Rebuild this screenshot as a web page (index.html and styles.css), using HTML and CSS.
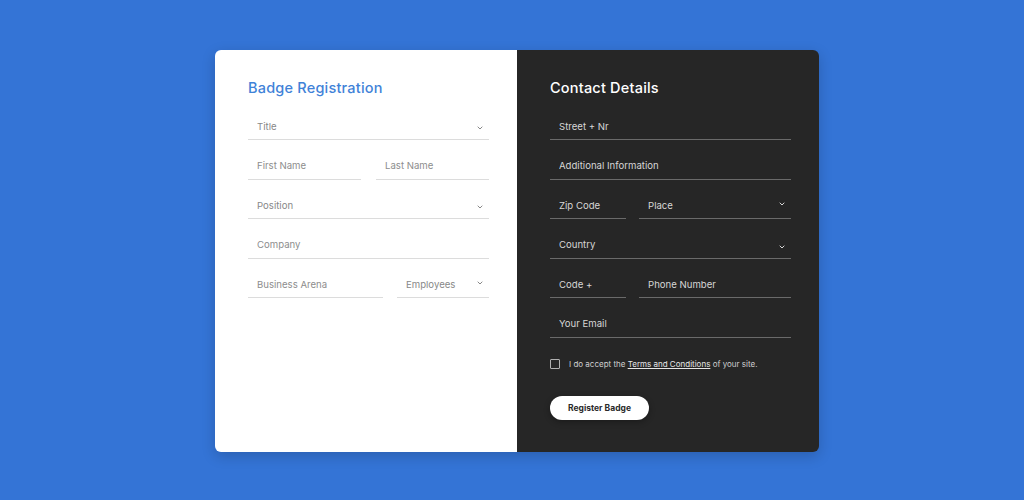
FILE: index.html
```html
<!DOCTYPE html>
<html lang="en">
<head>
    <meta charset="UTF-8">
    <meta name="viewport" content="width=device-width, initial-scale=1.0">
    <title>Badge Registration</title>
    <link rel="stylesheet" href="styles.css">
</head>
<body>

<div class="card">
    <div class="panel panel-light">
        <h2 class="heading">Badge Registration</h2>
        <div class="fields">
            <div class="field select">
                <select><option>Title</option></select>
                <svg class="chevron" viewBox="0 0 6 4" width="6" height="4"><path d="M0.7 0.7 L3 3 L5.3 0.7" /></svg>
            </div>
            <div class="row">
                <div class="field"><input type="text" placeholder="First Name"></div>
                <div class="field"><input type="text" placeholder="Last Name"></div>
            </div>
            <div class="field select">
                <select><option>Position</option></select>
                <svg class="chevron" viewBox="0 0 6 4" width="6" height="4"><path d="M0.7 0.7 L3 3 L5.3 0.7" /></svg>
            </div>
            <div class="field"><input type="text" placeholder="Company"></div>
            <div class="row row-arena">
                <div class="field"><input type="text" placeholder="Business Arena"></div>
                <div class="field select">
                    <select><option>Employees</option></select>
                    <svg class="chevron up" viewBox="0 0 6 4" width="6" height="4"><path d="M0.7 0.7 L3 3 L5.3 0.7" /></svg>
                </div>
            </div>
        </div>
    </div>

    <div class="panel panel-dark">
        <h2 class="heading">Contact Details</h2>
        <div class="fields">
            <div class="field"><input type="text" placeholder="Street + Nr"></div>
            <div class="field"><input type="text" placeholder="Additional Information"></div>
            <div class="row row-short">
                <div class="field"><input type="text" placeholder="Zip Code"></div>
                <div class="field select">
                    <select><option>Place</option></select>
                    <svg class="chevron up" viewBox="0 0 6 4" width="6" height="4"><path d="M0.7 0.7 L3 3 L5.3 0.7" /></svg>
                </div>
            </div>
            <div class="field select">
                <select><option>Country</option></select>
                <svg class="chevron" viewBox="0 0 6 4" width="6" height="4"><path d="M0.7 0.7 L3 3 L5.3 0.7" /></svg>
            </div>
            <div class="row row-short">
                <div class="field"><input type="text" placeholder="Code +"></div>
                <div class="field"><input type="text" placeholder="Phone Number"></div>
            </div>
            <div class="field"><input type="email" placeholder="Your Email"></div>
        </div>

        <label class="terms">
            <span class="box"></span>
            <span>I do accept the <a href="#">Terms and Conditions</a> of your site.</span>
        </label>

        <button class="register">Register Badge</button>
    </div>
</div>

</body>
</html>
```

FILE: styles.css
```css
* {
    margin: 0;
    padding: 0;
    box-sizing: border-box;
}

body {
    font-family: 'Inter', 'Noto Sans', sans-serif;
    background-color: #3474d6;
    height: 100vh;
    display: flex;
    justify-content: center;
    align-items: flex-start;
    padding: 50px 0 0 10px;
}

.card {
    width: 604px;
    height: 402px;
    display: flex;
    border-radius: 6px;
    overflow: hidden;
    box-shadow: 0 4px 14px rgba(0, 0, 0, 0.18);
}

.panel {
    width: 302px;
    padding: 29px 28px 0 33px;
}

.panel-light {
    background-color: #ffffff;
}

.panel-dark {
    background-color: #262626;
}

.heading {
    font-size: 14.5px;
    line-height: 18px;
    font-weight: 500;
    margin-bottom: 13px;
    letter-spacing: 0.2px;
}

.panel-light .heading {
    color: #3f82d8;
}

.panel-dark .heading {
    color: #ffffff;
}

.fields {
    display: flex;
    flex-direction: column;
    gap: 9.5px;
}

.row {
    display: grid;
    grid-template-columns: 1fr 1fr;
    gap: 15px;
}

.row-arena {
    grid-template-columns: 135px 1fr;
    gap: 14px;
}

.row-short {
    grid-template-columns: 76px 1fr;
    gap: 13px;
}

.field {
    position: relative;
    height: 30px;
    border-bottom: 1px solid #dcdcdc;
}

.panel-dark .field {
    border-bottom-color: #6a6a6a;
}

.field input,
.field select {
    width: 100%;
    height: 100%;
    border: none;
    outline: none;
    background: transparent;
    appearance: none;
    -webkit-appearance: none;
    font-family: inherit;
    font-size: 9.6px;
    padding: 3px 9px 0;
    color: #888888;
}

.panel-light input::placeholder {
    color: #8d8d8d;
}

.panel-dark input,
.panel-dark select {
    color: #d6d6d6;
}

.panel-dark input::placeholder {
    color: #d6d6d6;
}

.chevron {
    position: absolute;
    right: 6px;
    top: 16px;
    fill: none;
    stroke: #888888;
    stroke-width: 1;
}

.chevron.up {
    top: 13px;
}

.panel-dark .chevron {
    stroke: #d6d6d6;
}

.terms {
    display: flex;
    align-items: center;
    gap: 9px;
    margin-top: 21px;
    font-size: 8px;
    color: #cfcfcf;
}

.terms .box {
    width: 10px;
    height: 10px;
    border: 1px solid #b0b0b0;
    border-radius: 1px;
}

.terms a {
    color: #e6e6e6;
    text-decoration: underline;
}

.register {
    margin-top: 27px;
    width: 99px;
    height: 24px;
    border: none;
    border-radius: 12px;
    background-color: #ffffff;
    color: #2a2a2a;
    font-family: inherit;
    font-size: 8.5px;
    font-weight: 700;
    cursor: pointer;
    box-shadow: 0 2px 6px rgba(0, 0, 0, 0.3);
}
```
